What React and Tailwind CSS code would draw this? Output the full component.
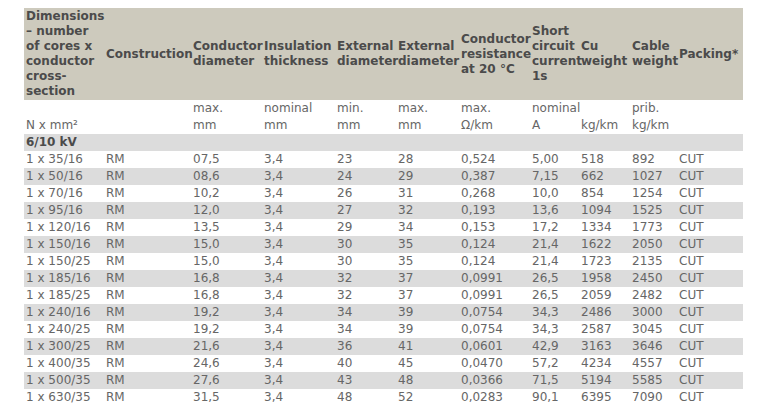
import React from "react";

const columns = [
  { w: "w-[80px]", head: "Dimensions – number of cores x conductor cross-section", unit: ["", "N x mm²"] },
  { w: "w-[87px]", head: "Construction", unit: ["", ""] },
  { w: "w-[71px]", head: "Conductor diameter", unit: ["max.", "mm"] },
  { w: "w-[73px]", head: "Insulation thickness", unit: ["nominal", "mm"] },
  { w: "w-[61px]", head: "External diameter", unit: ["min.", "mm"] },
  { w: "w-[63px]", head: "External diameter", unit: ["max.", "mm"] },
  { w: "w-[71px]", head: "Conductor resistance at 20 °C", unit: ["max.", "Ω/km"] },
  { w: "w-[49px]", head: "Short circuit current 1s", unit: ["nominal", "A"] },
  { w: "w-[51px]", head: "Cu weight", unit: ["", "kg/km"] },
  { w: "w-[47px]", head: "Cable weight", unit: ["prib.", "kg/km"] },
  { w: "w-[66px]", head: "Packing*", unit: ["", ""] },
];

// 6/10 kV cables
const rows = [
  ["1 x 35/16", "RM", "07,5", "3,4", "23", "28", "0,524", "5,00", "518", "892", "CUT"],
  ["1 x 50/16", "RM", "08,6", "3,4", "24", "29", "0,387", "7,15", "662", "1027", "CUT"],
  ["1 x 70/16", "RM", "10,2", "3,4", "26", "31", "0,268", "10,0", "854", "1254", "CUT"],
  ["1 x 95/16", "RM", "12,0", "3,4", "27", "32", "0,193", "13,6", "1094", "1525", "CUT"],
  ["1 x 120/16", "RM", "13,5", "3,4", "29", "34", "0,153", "17,2", "1334", "1773", "CUT"],
  ["1 x 150/16", "RM", "15,0", "3,4", "30", "35", "0,124", "21,4", "1622", "2050", "CUT"],
  ["1 x 150/25", "RM", "15,0", "3,4", "30", "35", "0,124", "21,4", "1723", "2135", "CUT"],
  ["1 x 185/16", "RM", "16,8", "3,4", "32", "37", "0,0991", "26,5", "1958", "2450", "CUT"],
  ["1 x 185/25", "RM", "16,8", "3,4", "32", "37", "0,0991", "26,5", "2059", "2482", "CUT"],
  ["1 x 240/16", "RM", "19,2", "3,4", "34", "39", "0,0754", "34,3", "2486", "3000", "CUT"],
  ["1 x 240/25", "RM", "19,2", "3,4", "34", "39", "0,0754", "34,3", "2587", "3045", "CUT"],
  ["1 x 300/25", "RM", "21,6", "3,4", "36", "41", "0,0601", "42,9", "3163", "3646", "CUT"],
  ["1 x 400/35", "RM", "24,6", "3,4", "40", "45", "0,0470", "57,2", "4234", "4557", "CUT"],
  ["1 x 500/35", "RM", "27,6", "3,4", "43", "48", "0,0366", "71,5", "5194", "5585", "CUT"],
  ["1 x 630/35", "RM", "31,5", "3,4", "48", "52", "0,0283", "90,1", "6395", "7090", "CUT"],
];

function App() {
  return (
    <div className="bg-white w-[757px] h-[406px] overflow-hidden pt-[8px] pl-[24px] font-['DejaVu_Sans',Verdana,sans-serif] text-[12px]">
      <table className="table-fixed border-collapse w-[719px]">
        <colgroup>
          {columns.map((c, i) => (
            <col key={i} className={c.w} />
          ))}
        </colgroup>
        <thead>
          {/* header */}
          <tr className="bg-[#cdcabd] text-[#4b4b4b]">
            {columns.map((c, i) => (
              <th
                key={i}
                className="text-left align-middle font-bold leading-[15px] py-px pl-[2px] pr-0 break-normal"
              >
                {c.head}
              </th>
            ))}
          </tr>
        </thead>
        <tbody className="text-[#666] leading-[17px]">
          {/* units */}
          <tr>
            {columns.map((c, i) => (
              <td key={i} className="align-bottom pl-[2px] p-0 whitespace-nowrap">
                <div>{c.unit[0] || "\u00a0"}</div>
                <div>{c.unit[1] || "\u00a0"}</div>
              </td>
            ))}
          </tr>
          <tr className="bg-[#dcdcdc]">
            <td colSpan={11} className="pl-[2px] font-bold text-[#4b4b4b]">
              6/10 kV
            </td>
          </tr>
          {rows.map((r, i) => (
            <tr key={i} className={i % 2 === 1 ? "bg-[#dcdcdc]" : "bg-white"}>
              {r.map((v, j) => (
                <td key={j} className="pl-[2px] whitespace-nowrap">
                  {v}
                </td>
              ))}
            </tr>
          ))}
        </tbody>
      </table>
    </div>
  );
}

export default App;
